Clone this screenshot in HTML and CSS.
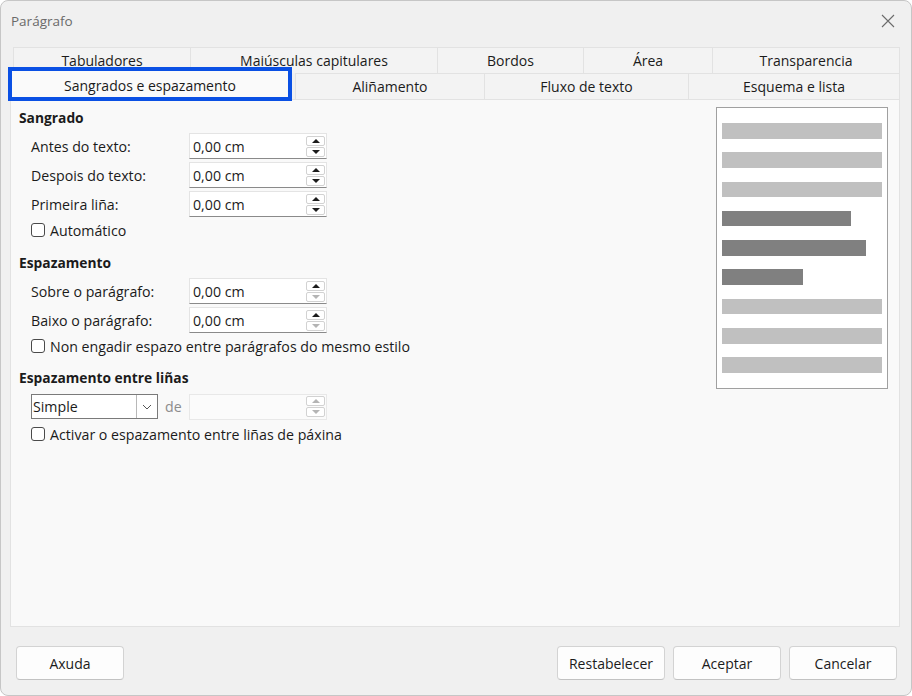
FILE: index.html
```html
<!DOCTYPE html>
<html lang="gl">
<head>
    <meta charset="UTF-8">
    <title>Parágrafo</title>
    <link rel="stylesheet" href="styles.css">
</head>
<body>
<div class="dialog">
    <div class="titlebar">
        <span class="title">Parágrafo</span>
        <svg class="close" width="14" height="14" viewBox="0 0 14 14">
            <path d="M1 1 L13 13 M13 1 L1 13" stroke="#6b6b6b" stroke-width="1.1" fill="none"/>
        </svg>
    </div>

    <div class="tabs">
        <div class="tabrow">
            <div class="tab w-tab">Tabuladores</div>
            <div class="tab w-mai">Maiúsculas capitulares</div>
            <div class="tab w-bor">Bordos</div>
            <div class="tab w-are">Área</div>
            <div class="tab w-tra">Transparencia</div>
        </div>
        <div class="tabrow second">
            <div class="tab selected">Sangrados e espazamento</div>
            <div class="tab w-ali">Aliñamento</div>
            <div class="tab w-flu">Fluxo de texto</div>
            <div class="tab w-esq">Esquema e lista</div>
        </div>
    </div>

    <div class="panel">
        <div class="form">
            <div class="heading">Sangrado</div>
            <div class="field-row first">
                <span class="label">Antes do texto:</span>
                <div class="spin"><span class="value">0,00 cm</span><span class="btns"><span class="btn"><i class="up"></i></span><span class="btn"><i class="down"></i></span></span></div>
            </div>
            <div class="field-row">
                <span class="label">Despois do texto:</span>
                <div class="spin"><span class="value">0,00 cm</span><span class="btns"><span class="btn"><i class="up"></i></span><span class="btn"><i class="down"></i></span></span></div>
            </div>
            <div class="field-row">
                <span class="label">Primeira liña:</span>
                <div class="spin"><span class="value">0,00 cm</span><span class="btns"><span class="btn"><i class="up"></i></span><span class="btn"><i class="down"></i></span></span></div>
            </div>
            <div class="check-row"><span class="box"></span>Automático</div>

            <div class="heading h2">Espazamento</div>
            <div class="field-row first2">
                <span class="label">Sobre o parágrafo:</span>
                <div class="spin"><span class="value">0,00 cm</span><span class="btns"><span class="btn"><i class="up"></i></span><span class="btn"><i class="down off"></i></span></span></div>
            </div>
            <div class="field-row">
                <span class="label">Baixo o parágrafo:</span>
                <div class="spin"><span class="value">0,00 cm</span><span class="btns"><span class="btn"><i class="up"></i></span><span class="btn"><i class="down off"></i></span></span></div>
            </div>
            <div class="check-row"><span class="box"></span>Non engadir espazo entre parágrafos do mesmo estilo</div>

            <div class="heading h3">Espazamento entre liñas</div>
            <div class="line-row">
                <div class="combo"><span class="combo-value">Simple</span><span class="combo-arrow"><svg width="10" height="6" viewBox="0 0 10 6"><path d="M1 1 L5 5 L9 1" stroke="#555" stroke-width="1" fill="none"/></svg></span></div>
                <span class="de">de</span>
                <div class="spin disabled"><span class="value"></span><span class="btns"><span class="btn"><i class="up off"></i></span><span class="btn"><i class="down off"></i></span></span></div>
            </div>
            <div class="check-row last"><span class="box"></span>Activar o espazamento entre liñas de páxina</div>
        </div>

        <div class="preview">
            <div class="bar"></div>
            <div class="bar"></div>
            <div class="bar"></div>
            <div class="bar dark" style="width:129px"></div>
            <div class="bar dark" style="width:144px"></div>
            <div class="bar dark" style="width:81px"></div>
            <div class="bar"></div>
            <div class="bar"></div>
            <div class="bar"></div>
        </div>
    </div>

    <div class="footer">
        <button class="button">Axuda</button>
        <div class="spacer"></div>
        <button class="button">Restabelecer</button>
        <button class="button">Aceptar</button>
        <button class="button">Cancelar</button>
    </div>
</div>
</body>
</html>
```

FILE: styles.css
```css
body {
    margin: 0;
    background: #ffffff;
    font-family: "Open Sans", "Noto Sans", sans-serif;
    color: #1b1b1b;
}
.dialog {
    width: 912px;
    height: 696px;
    box-sizing: border-box;
    border: 1px solid #c6c6c6;
    border-radius: 8px;
    background: #f0f0f0;
    display: flex;
    flex-direction: column;
    overflow: hidden;
}
.titlebar {
    height: 39px;
    display: flex;
    align-items: center;
    justify-content: space-between;
    padding: 0 16px 0 10px;
}
.title {
    font-size: 13.5px;
    color: #6a6a6a;
}

/* tabs */
.tabs {
    padding: 7px 0 0 12px;
}
.tabrow {
    display: flex;
    height: 26px;
}
.tab {
    box-sizing: border-box;
    height: 26px;
    background: #f3f3f3;
    border: 1px solid #e2e2e2;
    border-bottom: none;
    margin-left: -1px;
    font-size: 14px;
    line-height: 26px;
    text-align: center;
    white-space: nowrap;
}
.w-tab { width: 178px; margin-left: 0; }
.w-mai { width: 248px; }
.w-bor { width: 147px; }
.w-are { width: 130px; }
.w-tra { width: 188px; }
.second {
    margin-left: -3px;
    align-items: flex-end;
}
.tab.selected {
    width: 280px;
    height: 30px;
    margin: -4px 0 0 0;
    padding-top: 3px;
    background: #fafafa;
    border: none;
    outline: 4px solid #0a50e4;
    outline-offset: -2px;
    line-height: 28px;
    position: relative;
    z-index: 2;
}
.w-ali { width: 190px; margin-left: 5px; }
.w-flu { width: 205px; }
.w-esq { width: 212px; }

/* panel */
.panel {
    flex: 1;
    margin: 0 11px 0 9px;
    border: 1px solid #e2e2e2;
    background: #f9f9f9;
    display: flex;
    padding: 0 11px 0 8px;
}
.form {
    flex: 1;
    padding-top: 9px;
    font-size: 14.2px;
}
.heading {
    height: 18px;
    line-height: 18px;
    font-weight: 700;
    font-size: 13.8px;
}
.h2 { margin-top: 14px; }
.h3 { margin-top: 13px; }
.field-row {
    display: flex;
    align-items: center;
    height: 26px;
    margin: 3px 0 0 12px;
}
.field-row.first { margin-top: 6px; }
.field-row.first2 { margin-top: 6px; }
.label {
    width: 158px;
}
.spin {
    box-sizing: border-box;
    width: 138px;
    height: 26px;
    background: #ffffff;
    border: 1px solid #e4e4e4;
    border-bottom-color: #8a8a8a;
    display: flex;
    align-items: center;
    justify-content: space-between;
    padding: 0 1px 0 3px;
}
.spin.disabled {
    background: #fbfbfb;
    border-color: #e8e8e8;
}
.btns {
    display: flex;
    flex-direction: column;
    gap: 1px;
}
.btn {
    box-sizing: border-box;
    width: 19px;
    height: 10px;
    border: 1px solid #d2d2d2;
    border-radius: 2px;
    background: #ffffff;
    display: flex;
    align-items: center;
    justify-content: center;
}
.up, .down {
    width: 0;
    height: 0;
    border-left: 4px solid transparent;
    border-right: 4px solid transparent;
}
.up { border-bottom: 4px solid #1b1b1b; }
.down { border-top: 4px solid #1b1b1b; }
.up.off { border-bottom-color: #b4b4b4; }
.down.off { border-top-color: #b4b4b4; }

.check-row {
    display: flex;
    align-items: center;
    height: 20px;
    margin: 3px 0 0 12px;
}
.check-row.last { margin-top: 5px; }
.box {
    box-sizing: border-box;
    width: 14px;
    height: 14px;
    border: 1px solid #4a4a4a;
    border-radius: 3px;
    background: #ffffff;
    margin-right: 5px;
}
.line-row {
    display: flex;
    align-items: center;
    height: 25px;
    margin: 7px 0 0 12px;
}
.combo {
    box-sizing: border-box;
    width: 127px;
    height: 25px;
    border: 1px solid #7a7a7a;
    background: #ffffff;
    display: flex;
}
.combo-value {
    flex: 1;
    line-height: 24px;
    padding-left: 1px;
}
.combo-arrow {
    width: 20px;
    border-left: 1px solid #b8b8b8;
    display: flex;
    align-items: center;
    justify-content: center;
}
.de {
    width: 31px;
    padding-left: 7px;
    box-sizing: border-box;
    color: #8c8c8c;
}

/* preview */
.preview {
    box-sizing: border-box;
    width: 172px;
    height: 282px;
    margin-top: 7px;
    border: 1px solid #a0a0a0;
    background: #ffffff;
    padding: 15px 5px 0 5px;
}
.bar {
    width: 160px;
    height: 15.5px;
    background: #c0c0c0;
    margin-bottom: 13.8px;
}
.bar.dark {
    background: #808080;
}

/* footer */
.footer {
    height: 68px;
    box-sizing: border-box;
    display: flex;
    align-items: flex-start;
    gap: 8px;
    padding: 19px 14px 0 15px;
}
.spacer {
    flex: 1;
}
.button {
    width: 108px;
    height: 34px;
    background: #fdfdfd;
    border: 1px solid #d3d3d3;
    border-bottom-color: #c2c2c2;
    border-radius: 4px;
    font-family: "Open Sans", "Noto Sans", sans-serif;
    font-size: 14px;
    color: #1b1b1b;
    padding: 0;
}
```
